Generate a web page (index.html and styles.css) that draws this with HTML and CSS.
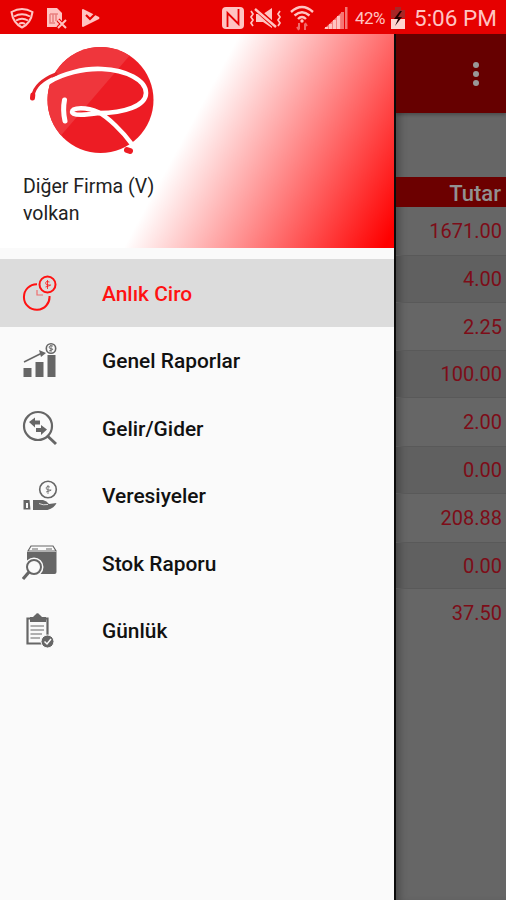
FILE: index.html
```html
<!DOCTYPE html>
<html lang="tr">
<head>
<meta charset="utf-8">
<title>Anlık Ciro</title>
<link rel="stylesheet" href="styles.css">
</head>
<body>
<div class="screen">
  <header class="status">
    <div class="status-left">
      <svg width="24" height="22" viewBox="0 0 24 22" fill="none" stroke="currentColor" stroke-width="2"><path d="M1.500 5Q12-1 22.500 5Q21 16 12 20.500Q3 16 1.500 5Z"/><path d="M4 9.500Q12 5 20 9.500M6 13.500Q12 10 18 13.500M9 17Q12 15 15 17" stroke-width="2"/></svg>
      <svg width="22" height="22" viewBox="0 0 22 22"><path d="M1 1h10l5 5v8l-5 6H1z" fill="currentColor"/><path d="M4 7h8M4 7v9h5M7 7v8M10 7v7" stroke="#e98080" stroke-width="1.500" fill="none"/><path d="M12 13l8 8M20 13l-8 8" stroke="#e60000" stroke-width="4"/><path d="M12 13l8 8M20 13l-8 8" stroke="currentColor" stroke-width="2"/></svg>
      <svg width="20" height="20" viewBox="0 0 20 20"><path d="M2 1l16 8q1 1 0 2L2 19q-1 0-1-1V2q0-1 1-1z" fill="currentColor"/><path d="M5 7l4 4 8-8" stroke="#e60000" stroke-width="2.200" fill="none"/></svg>
    </div>
    <div class="status-right">
      <svg width="24" height="24" viewBox="0 0 24 24"><rect x="1" y="1" width="22" height="22" rx="4" fill="currentColor"/><path d="M6.500 21V7l11 11V3" fill="none" stroke="#e60000" stroke-width="1.800"/></svg>
      <svg class="mute" width="34" height="22" viewBox="0 0 34 22"><path d="M7 7h7l9-6v20l-9-6H7z" fill="currentColor"/><path d="M7 2l20 18" stroke="#e60000" stroke-width="5"/><path d="M6 2l21 18" stroke="currentColor" stroke-width="2.400"/><path d="M2 4l2 3-2 3 2 3-2 3 2 3M31 4l-2 3 2 3-2 3 2 3-2 3" fill="none" stroke="currentColor" stroke-width="1.700"/></svg>
      <svg class="wifi" width="24" height="26" viewBox="0 0 24 26"><path d="M1 7Q12-3 23 7M4.500 10.500Q12 4 19.500 10.500M8 14Q12 10 16 14" fill="none" stroke="currentColor" stroke-width="2.400"/><circle cx="12" cy="16" r="1.700" fill="currentColor"/><path d="M9 18v6M7 22l2 3M15 25v-6M17 21l-2-3" stroke="#f06a6a" stroke-width="2"/></svg>
      <svg class="signal" width="24" height="24" viewBox="0 0 24 24" fill="currentColor"><path d="M0 23L17 7v16z" opacity=".65"/><path d="M1 21h3v2H1zM5 18h3v5H5zM9 14h3v9H9zM13 10h3v13h-3z"/><path d="M17 6h3v17h-3zM21 1h2.500v22H21z" opacity=".6"/></svg>
      <span class="percent">42%</span>
      <svg class="battery" width="14" height="22" viewBox="0 0 14 22"><path d="M4 0h6v3h4v8H0V3h4z" fill="#a82626"/><path d="M0 12h14v10H0z" fill="#ffd4d0"/><path d="M9 4L3 12h4l-3 7 7-9H7l4-6z" fill="#200"/></svg>
      <span class="clock">5:06 PM</span>
    </div>
  </header>
  <div class="body">
    <nav class="drawer">
      <div class="profile">
        <svg class="logo" width="130" height="112" viewBox="28 44 130 112" fill="none" stroke-linecap="round">
          <defs><clipPath id="disc"><circle cx="100.500" cy="100" r="53"/></clipPath></defs>
          <circle cx="100.500" cy="100" r="53" fill="#ed1c24"/>
          <path d="M40 160V40h103z" fill="#ef363c" clip-path="url(#disc)"/>
          <path d="M49 82C62 74 84 68 102 69C126 70 146 80 146 93C146 106 124 113 99 113" stroke="#fff" stroke-width="4.600"/>
          <path d="M99 113C86 115 72 116 72 112C72 107 87 107 98 112C108 117 123 132 131 143" stroke="#fff" stroke-width="4.500"/>
          <path d="M33 96C34 87 43 79 56 74" stroke="#e5232b" stroke-width="3.200"/>
          <path d="M32.500 98l.3-3" stroke="#ed1c24" stroke-width="5"/>
          <path d="M127 150l3 1" stroke="#ed1c24" stroke-width="6"/>
          <path d="M64.500 100Q62.500 110 65 121" stroke="#fff" stroke-width="5"/>
        </svg>
        <div class="firm">Diğer Firma (V)</div>
        <div class="user">volkan</div>
      </div>
      <ul class="menu">
        <li class="item active">
          <svg viewBox="22 275 36 36" fill="none" stroke="currentColor" stroke-width="2"><path d="M37 284.200A12.800 12.800 0 1 0 49.500 296"/><circle cx="47.500" cy="284.500" r="8"/><path d="M49.500 282q-4-1.500-4 1t4 2-4 2M47.500 280v9" stroke-width=".8"/><path d="M37 290v5h6" stroke-width="1.200" opacity=".55"/></svg>
          <span>Anlık Ciro</span></li>
        <li class="item">
          <svg viewBox="22 343 36 36" fill="none" stroke="currentColor"><path d="M23.500 368h8v9h-8zM35.500 362h8v15h-8zM47.500 355h8v22h-8z" fill="currentColor" stroke="none"/><path d="M24 362l18-9" stroke-width="1.500"/><path d="M39 350l7 3-5 4z" fill="currentColor" stroke="none"/><circle cx="51" cy="348.500" r="4.700" stroke-width="1.600"/><path d="M53 346q-4-1-4 1t3 2-3 2M51 345v7" stroke-width=".9"/></svg>
          <span>Genel Raporlar</span></li>
        <li class="item">
          <svg viewBox="22 410 36 36" fill="none" stroke="currentColor"><circle cx="38" cy="426" r="14" stroke-width="2.200"/><path d="M47.500 436l8.500 8" stroke-width="3"/><path d="M29 422l6-4.500v3h5v4h-5v3zM47 429.500l-6-4.500v3h-5v4h5v3z" fill="currentColor" stroke="none"/></svg>
          <span>Gelir/Gider</span></li>
        <li class="item">
          <svg viewBox="22 478 36 36" fill="none" stroke="currentColor"><circle cx="48" cy="489.500" r="8.300" stroke-width="1.600"/><path d="M50 487q-4-1.500-4 1t4 2-4 2M48 485v9" stroke-width=".8"/><path d="M23.500 500h6l1 9.500h-7z" fill="currentColor" stroke="none"/><path d="M27 503v5" stroke="#fafafa" stroke-width="2"/><path d="M33 500h10q4 1 6 4l7.500-1q-2 5-9 7H33z" fill="currentColor" stroke="none"/><path d="M39 503.500q4 2 9 1" stroke="#fafafa" stroke-width=".8"/></svg>
          <span>Veresiyeler</span></li>
        <li class="item">
          <svg viewBox="22 545 36 36" fill="none" stroke="currentColor"><path d="M28 551l3-5h22l3 5z" stroke-width="1.200"/><path d="M32 549h6M46 549h6" stroke-width="1.200"/><path d="M27 552h29.500v20q0 2-2 2H29q-2 0-2-2z" fill="currentColor" stroke="none"/><circle cx="34" cy="567" r="8.500" fill="#fafafa" stroke="#fafafa" stroke-width="2"/><circle cx="34" cy="567" r="7" fill="#fafafa" stroke-width="2"/><path d="M29 572l-6 7" stroke-width="3.200"/></svg>
          <span>Stok Raporu</span></li>
        <li class="item">
          <svg viewBox="22 613 36 36" fill="none" stroke="currentColor"><path d="M27.500 618.500h20v25h-20z" stroke-width="2.200"/><path d="M30 617h3l2-2h5l2 2h4v5H30z" fill="currentColor" stroke="none"/><circle cx="37.500" cy="615.500" r="1.800" fill="currentColor"/><path d="M30.500 626H44M30.500 630H44M30.500 634H42M30.500 638H40" stroke-width="1.200"/><circle cx="47.500" cy="641.500" r="6.500" fill="currentColor" stroke="#fafafa" stroke-width="1"/><path d="M44.500 641.500l2.500 2.500 4-5" stroke="#fafafa" stroke-width="1.500"/></svg>
          <span>Günlük</span></li>
      </ul>
    </nav>
    <main class="behind">
      <div class="appbar"><i></i><i></i><i></i></div>
      <div class="spacer"></div>
      <div class="thead">Tutar</div>
      <div class="row">1671.00</div>
      <div class="row alt">4.00</div>
      <div class="row">2.25</div>
      <div class="row alt">100.00</div>
      <div class="row">2.00</div>
      <div class="row alt">0.00</div>
      <div class="row">208.88</div>
      <div class="row alt">0.00</div>
      <div class="row">37.50</div>
    </main>
  </div>
</div>
</body>
</html>
```
FILE: styles.css
```css
* { box-sizing: border-box; }
body { margin: 0; font-family: Roboto, "Noto Sans", sans-serif; }
svg { display: block; flex: none; }
.screen { width: 506px; height: 900px; display: flex; flex-direction: column; overflow: hidden; }
.status { height: 34px; flex: none; background: #e60000; color: #ffc4c2; display: flex; justify-content: space-between; align-items: center; padding: 2px 12px 0 10px; }
.status-left { display: flex; align-items: center; gap: 12px; }
.status-left svg:nth-child(3) { margin-left: 1px; }
.status-right { display: flex; align-items: center; }
.mute { margin-left: 4px; }
.wifi { margin-left: 7px; }
.signal { margin-left: 10px; }
.percent { font-size: 17px; width: 32px; margin-left: 7px; letter-spacing: -.6px; white-space: nowrap; }
.battery { margin-left: 4px; }
.clock { font-size: 22.5px; width: 80px; margin-left: 9px; white-space: nowrap; }
.body { flex: 1; display: flex; min-height: 0; }
.drawer { width: 394px; flex: none; background: #fafafa; }
.profile { height: 214px; padding: 10px 0 0 23px; background: linear-gradient(118.5deg, #fff 47%, #f00 98%); font-size: 19.5px; line-height: 26px; color: #222; }
.logo { margin-left: 5px; margin-bottom: 18px; }
.user { padding-top: 1px; }
.menu { list-style: none; margin: 11px 0 0; padding: 0; }
.item { height: 67.5px; display: flex; align-items: center; padding: 0 22px; gap: 44px; font-size: 20.9px; font-weight: 500; color: #111; }
.item svg { width: 36px; height: 36px; color: #666; margin-top: 1px; }
.item span { padding-top: 2px; }
.active { background: #dcdcdc; color: #ff1212; }
.active svg { color: #ff1212; margin-top: 0; }
.behind { flex: 1; background: #666; border-left: 2px solid #0b0b0b; box-shadow: inset 8px 0 8px -5px rgba(0,0,0,.3); color: #7d0d18; }
.appbar { height: 79px; background: #660000; display: flex; flex-direction: column; align-items: flex-end; justify-content: center; gap: 3px; padding-right: 27px; box-shadow: 0 2px 3px rgba(0,0,0,.25); }
.appbar i { width: 6px; height: 6px; border-radius: 50%; background: #999; }
.spacer { height: 64px; }
.thead { height: 30px; background: #6c0000; color: #929292; font-size: 22px; font-weight: 500; line-height: 33px; text-align: right; padding-right: 5px; }
.row { height: 47.8px; line-height: 48px; font-size: 20px; text-align: right; padding-right: 4px; }
.alt { background: rgba(0,0,0,.06); box-shadow: inset 0 1px #595959, inset 0 -1px #595959; }
```
